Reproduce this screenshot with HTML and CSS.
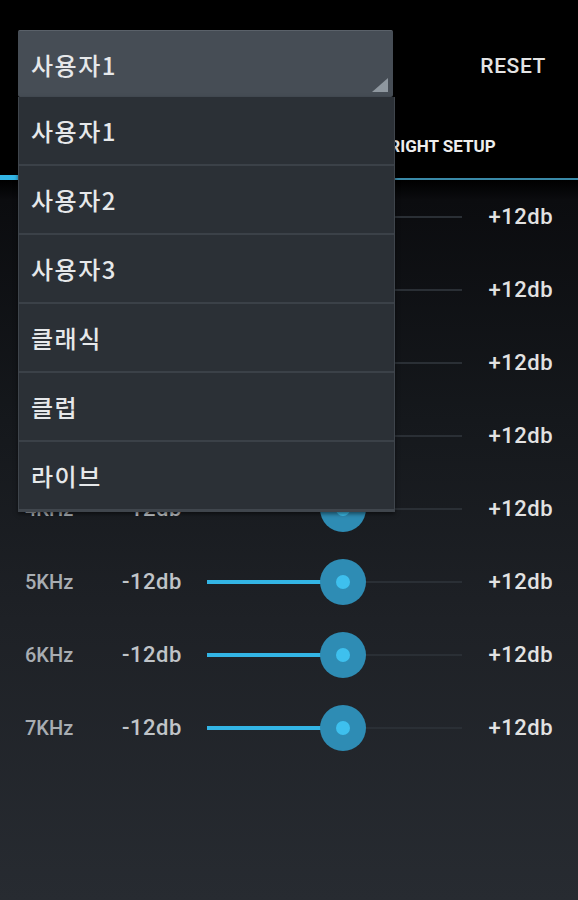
FILE: index.html
```html
<!DOCTYPE html>
<html lang="ko">
<head>
    <meta charset="UTF-8">
    <meta name="viewport" content="width=device-width, initial-scale=1.0">
    <title>이퀄라이저</title>
    <link rel="stylesheet" href="styles.css">
</head>
<body>
    <div class="screen">
        <div class="actionbar">
            <div class="spinner">
                <span class="spinner-text">사용자1</span>
                <svg class="spinner-corner" width="16" height="14" viewBox="0 0 16 14">
                    <polygon points="0,14 16,14 16,0" fill="#8e979f"/>
                </svg>
            </div>
            <div class="reset">RESET</div>
        </div>

        <div class="tabs">
            <div class="tab selected">LEFT SETUP</div>
            <div class="tab">RIGHT SETUP</div>
        </div>

        <div class="bands">
            <div class="band"><span class="freq">500Hz</span><span class="min">-12db</span><div class="track"><div class="fill"></div><div class="rest"></div><div class="thumb"></div></div><span class="max">+12db</span></div>
            <div class="band"><span class="freq">1KHz</span><span class="min">-12db</span><div class="track"><div class="fill"></div><div class="rest"></div><div class="thumb"></div></div><span class="max">+12db</span></div>
            <div class="band"><span class="freq">2KHz</span><span class="min">-12db</span><div class="track"><div class="fill"></div><div class="rest"></div><div class="thumb"></div></div><span class="max">+12db</span></div>
            <div class="band"><span class="freq">3KHz</span><span class="min">-12db</span><div class="track"><div class="fill"></div><div class="rest"></div><div class="thumb"></div></div><span class="max">+12db</span></div>
            <div class="band"><span class="freq">4KHz</span><span class="min">-12db</span><div class="track"><div class="fill"></div><div class="rest"></div><div class="thumb"></div></div><span class="max">+12db</span></div>
            <div class="band"><span class="freq">5KHz</span><span class="min">-12db</span><div class="track"><div class="fill"></div><div class="rest"></div><div class="thumb"></div></div><span class="max">+12db</span></div>
            <div class="band"><span class="freq">6KHz</span><span class="min">-12db</span><div class="track"><div class="fill"></div><div class="rest"></div><div class="thumb"></div></div><span class="max">+12db</span></div>
            <div class="band"><span class="freq">7KHz</span><span class="min">-12db</span><div class="track"><div class="fill"></div><div class="rest"></div><div class="thumb"></div></div><span class="max">+12db</span></div>
        </div>

        <!-- 드롭다운 메뉴 (열린 상태) -->
        <ul class="menu">
            <li>사용자1</li>
            <li>사용자2</li>
            <li>사용자3</li>
            <li>클래식</li>
            <li>클럽</li>
            <li>라이브</li>
        </ul>
    </div>
</body>
</html>
```

FILE: styles.css
```css
body {
    margin: 0;
    padding: 0;
    font-family: Roboto, "Noto Sans CJK KR", sans-serif;
    background: #000;
}
.screen {
    position: relative;
    width: 578px;
    height: 900px;
    overflow: hidden;
    background: linear-gradient(to bottom, #000 0, #000 180px, #0b0c0f 200px, #15181c 420px, #1e2126 620px, #272b31 900px);
}
.actionbar {
    display: flex;
    align-items: flex-start;
    height: 112px;
    box-sizing: border-box;
    padding: 30px 0 0 18px;
}
.spinner {
    position: relative;
    width: 375px;
    height: 67px;
    box-sizing: border-box;
    background: #464d55;
    border-top: 1px solid #5a6169;
    border-radius: 2px;
    display: flex;
    align-items: center;
    padding-left: 13px;
}
.spinner-text {
    font-family: "Noto Sans CJK KR", sans-serif;
    font-size: 24px;
    font-weight: 500;
    letter-spacing: 1.5px;
    color: #e6e8ea;
}
.spinner-corner {
    position: absolute;
    right: 5px;
    bottom: 5px;
}
.reset {
    margin-left: auto;
    height: 67px;
    display: flex;
    align-items: center;
    font-size: 21px;
    font-weight: 500;
    letter-spacing: 0.6px;
    color: #e4e4e4;
    padding: 4px 32px 0 0;
    box-sizing: border-box;
}
.tabs {
    display: grid;
    grid-template-columns: 1fr 1fr;
    height: 68px;
    border-bottom: 2px solid #3a8aa8;
    box-sizing: border-box;
}
.tab {
    display: flex;
    align-items: center;
    justify-content: center;
    font-size: 17px;
    font-weight: bold;
    color: #eeeeee;
    padding: 2px 0 0 18px;
}
.tab.selected {
    border-bottom: 5px solid #33b5e5;
    margin-bottom: -2px;
}
.bands {
    display: flex;
    flex-direction: column;
}
.band {
    display: grid;
    grid-template-columns: 97px 85px 255px 1fr;
    align-items: center;
    height: 73px;
    padding: 0 25px;
}
.freq {
    font-size: 20px;
    font-weight: 500;
    color: #a8adb2;
}
.min {
    font-size: 22px;
    font-weight: 500;
    letter-spacing: 0.5px;
    color: #c0c4c8;
}
.max {
    font-size: 22px;
    font-weight: 500;
    letter-spacing: 0.5px;
    color: #e2e2e2;
    text-align: right;
}
.track {
    position: relative;
    height: 46px;
    display: flex;
    align-items: center;
}
.fill {
    width: 136px;
    height: 4px;
    background: #33b5e5;
}
.rest {
    flex: 1;
    height: 2px;
    background: #2a2f35;
}
.thumb {
    position: absolute;
    left: 113px;
    top: 0;
    width: 46px;
    height: 46px;
    border-radius: 50%;
    background: #2e8cb4;
}
.thumb::after {
    content: "";
    position: absolute;
    left: 16px;
    top: 16px;
    width: 14px;
    height: 14px;
    border-radius: 50%;
    background: #3ec0ee;
}
.menu {
    position: absolute;
    left: 18px;
    top: 97px;
    width: 377px;
    margin: 0;
    padding: 0;
    list-style: none;
    background: #2b3036;
    border: 1px solid #3f454c;
    border-top: none;
    box-sizing: border-box;
    box-shadow: 0 2px 4px rgba(0, 0, 0, 0.5);
}
.menu li {
    height: 69px;
    box-sizing: border-box;
    display: flex;
    align-items: center;
    padding-left: 12px;
    font-family: "Noto Sans CJK KR", sans-serif;
    font-size: 24px;
    font-weight: 500;
    letter-spacing: 1.5px;
    color: #e6e8ea;
    border-bottom: 2px solid #3b4148;
}
.menu li:last-child {
    border-bottom: 2px solid #40464d;
}
```
